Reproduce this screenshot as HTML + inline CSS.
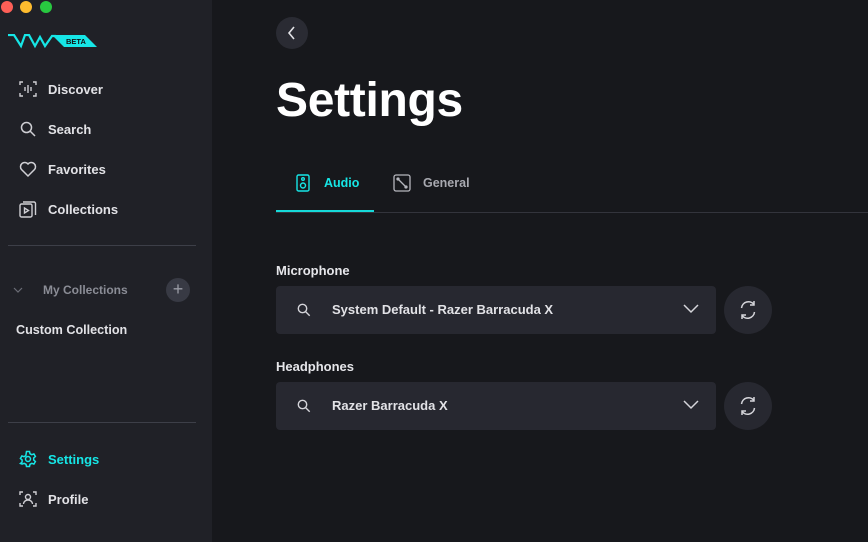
<!DOCTYPE html>
<html><head><style>
*{margin:0;padding:0;box-sizing:border-box}
body{width:868px;height:542px;background:#17181c;font-family:"Liberation Sans",sans-serif;position:relative;overflow:hidden;color:#e6e6ea}
.sb{position:absolute;left:0;top:0;width:212px;height:542px;background:#202127}
.dot{position:absolute;top:1px;width:12px;height:12px;border-radius:50%}
.nav{position:absolute;left:19px;display:flex;align-items:center;font-size:13px;font-weight:bold;color:#e2e2e6}
.nav svg{width:18px;height:18px;margin-right:11px}
.hr{position:absolute;left:8px;width:188px;height:1px;background:#3d3f48}
.lbl{position:absolute;left:276px;font-size:13px;font-weight:bold;color:#e6e6ea}
.inp{position:absolute;left:276px;width:440px;height:48px;background:#272830;border-radius:4px}
.inp .t{position:absolute;left:56px;top:16px;font-size:13px;font-weight:bold;color:#e2e2e6}
.ref{position:absolute;left:724px;width:48px;height:48px;border-radius:50%;background:#272830}
</style></head><body>
<div class="sb">
<div class="dot" style="left:1px;background:#fe5f57"></div>
<div class="dot" style="left:20px;background:#febc2e"></div>
<div class="dot" style="left:40px;background:#28c840"></div>
<svg style="position:absolute;left:8px;top:34px" width="90" height="15" viewBox="0 0 90 15"><polyline points="0,1 6,1 13,12 17,1 21,1 27,12 32,3 37,12 44,2 48,2" fill="none" stroke="#16e6e6" stroke-width="2.2"/><polygon points="44,1 77,1 89,13 56,13" fill="#16e6e6"/><text x="58" y="10" font-size="7.5" font-weight="bold" fill="#111" font-family="Liberation Sans">BETA</text></svg>
<div class="nav" style="top:80px"><svg viewBox="0 0 18 18" fill="none" stroke="#cfcfd4" stroke-width="1.4"><path d="M1 5V2h3M14 2h3v3M17 13v3h-3M4 16H1v-3"/><path d="M6 7v4M9 5v8M12 7v4"/></svg>Discover</div>
<div class="nav" style="top:120px"><svg viewBox="0 0 18 18" fill="none" stroke="#cfcfd4" stroke-width="1.5"><circle cx="7.5" cy="7.5" r="5"/><path d="M11 11l5 5"/></svg>Search</div>
<div class="nav" style="top:160px"><svg viewBox="0 0 18 18" fill="none" stroke="#cfcfd4" stroke-width="1.5"><path d="M9 16L2.5 9.5A3.8 3.8 0 0 1 9 4a3.8 3.8 0 0 1 6.5 5.5z"/></svg>Favorites</div>
<div class="nav" style="top:200px"><svg viewBox="0 0 18 18" fill="none" stroke="#cfcfd4" stroke-width="1.4"><rect x="1" y="4" width="12" height="13" rx="1.5"/><path d="M4 2h11a1.5 1.5 0 0 1 1.5 1.5V15"/><path d="M5.5 8v5l4-2.5z"/></svg>Collections</div>
<div class="hr" style="top:245px"></div>
<svg style="position:absolute;left:13px;top:287px" width="10" height="6" viewBox="0 0 10 6"><path d="M1 1l4 4 4-4" fill="none" stroke="#6b6d76" stroke-width="1.2"/></svg>
<div style="position:absolute;left:43px;top:283px;font-size:12px;font-weight:bold;color:#8b8d96">My Collections</div>
<div style="position:absolute;left:166px;top:278px;width:24px;height:24px;border-radius:50%;background:#383a44;color:#9a9ca5;font-size:18px;text-align:center;line-height:23px">+</div>
<div style="position:absolute;left:16px;top:323px;font-size:12.6px;font-weight:bold;color:#e2e2e6">Custom Collection</div>
<div class="hr" style="top:422px"></div>
<div class="nav" style="top:450px;color:#16e6e6"><svg viewBox="0 0 18 18" fill="none" stroke="#16e6e6" stroke-width="1.5"><path d="M7.5 1.5h3l.5 2.2 1.8 1 2.1-.8 1.5 2.6-1.7 1.5v2l1.7 1.5-1.5 2.6-2.1-.8-1.8 1-.5 2.2h-3l-.5-2.2-1.8-1-2.1.8L1.4 13.5l1.7-1.5V10L1.4 8.5l1.5-2.6 2.1.8 1.8-1z"/><circle cx="9" cy="9" r="2.5"/></svg>Settings</div>
<div class="nav" style="top:490px"><svg viewBox="0 0 18 18" fill="none" stroke="#cfcfd4" stroke-width="1.4"><path d="M1 5V2h3M14 2h3v3M17 13v3h-3M4 16H1v-3"/><circle cx="9" cy="7" r="2.5"/><path d="M4.5 14a4.5 4 0 0 1 9 0"/></svg>Profile</div>
</div>
<div style="position:absolute;left:276px;top:17px;width:32px;height:32px;border-radius:50%;background:#2a2b33"><svg width="32" height="32" viewBox="0 0 32 32"><path d="M18 10l-5 6 5 6" fill="none" stroke="#e2e2e6" stroke-width="1.6"/></svg></div>
<div style="position:absolute;left:276px;top:73px;font-size:48px;font-weight:bold;color:#fff;letter-spacing:-0.3px">Settings</div>
<svg style="position:absolute;left:296px;top:174px" width="14" height="18" viewBox="0 0 14 18" fill="none" stroke="#16e6e6" stroke-width="1.4"><rect x="1" y="1" width="12" height="16" rx="1.5"/><circle cx="7" cy="5" r="1.3"/><circle cx="7" cy="11.5" r="2.5"/></svg>
<div style="position:absolute;left:324px;top:176px;font-size:12.5px;font-weight:bold;color:#16e6e6">Audio</div>
<svg style="position:absolute;left:393px;top:174px" width="18" height="18" viewBox="0 0 18 18" fill="none" stroke="#b5b6bd" stroke-width="1.3"><rect x="1" y="1" width="16" height="16" rx="2"/><path d="M4.5 4.5l9 9"/><circle cx="5" cy="5" r="1"/><circle cx="13" cy="13" r="1"/></svg>
<div style="position:absolute;left:423px;top:176px;font-size:12.5px;font-weight:bold;color:#a8a9b0">General</div>
<div style="position:absolute;left:276px;top:212px;width:592px;height:1px;background:#33343c"></div>
<div style="position:absolute;left:276px;top:210px;width:98px;height:2px;background:#16d9d9"></div>
<div class="lbl" style="top:263px">Microphone</div>
<div class="inp" style="top:286px"><svg style="position:absolute;left:21px;top:17px" width="14" height="14" viewBox="0 0 14 14" fill="none" stroke="#d5d5da" stroke-width="1.4"><circle cx="5.5" cy="5.5" r="4.2"/><path d="M8.7 8.7l4 4"/></svg><div class="t">System Default - Razer Barracuda X</div><svg style="position:absolute;left:407px;top:18px" width="16" height="10" viewBox="0 0 16 10"><path d="M1 1l7 7 7-7" fill="none" stroke="#d5d5da" stroke-width="1.5"/></svg></div>
<div class="ref" style="top:286px"><svg width="48" height="48" viewBox="0 0 48 48" fill="none" stroke="#d5d5da" stroke-width="1.5"><path d="M17.5 22a7 7 0 0 1 12.5-3.5M30.5 26a7 7 0 0 1-12.5 3.5"/><path d="M30 15v4h-4M18 33v-4h4"/></svg></div>
<div class="lbl" style="top:359px">Headphones</div>
<div class="inp" style="top:382px"><svg style="position:absolute;left:21px;top:17px" width="14" height="14" viewBox="0 0 14 14" fill="none" stroke="#d5d5da" stroke-width="1.4"><circle cx="5.5" cy="5.5" r="4.2"/><path d="M8.7 8.7l4 4"/></svg><div class="t">Razer Barracuda X</div><svg style="position:absolute;left:407px;top:18px" width="16" height="10" viewBox="0 0 16 10"><path d="M1 1l7 7 7-7" fill="none" stroke="#d5d5da" stroke-width="1.5"/></svg></div>
<div class="ref" style="top:382px"><svg width="48" height="48" viewBox="0 0 48 48" fill="none" stroke="#d5d5da" stroke-width="1.5"><path d="M17.5 22a7 7 0 0 1 12.5-3.5M30.5 26a7 7 0 0 1-12.5 3.5"/><path d="M30 15v4h-4M18 33v-4h4"/></svg></div>
</body></html>
